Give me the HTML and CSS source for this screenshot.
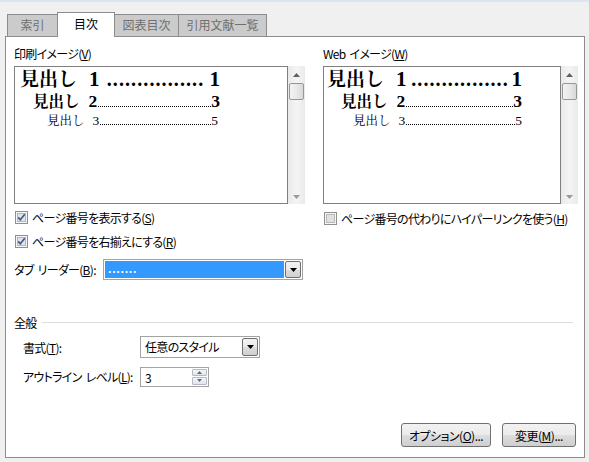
FILE: index.html
```html
<!DOCTYPE html>
<html lang="ja">
<head>
<meta charset="utf-8">
<title>目次</title>
<link rel="stylesheet" href="styles.css">
</head>
<body>
<div class="topline"></div>
<div class="tabs">
  <div class="tab w1">索引</div>
  <div class="tab active w2">目次</div>
  <div class="tab w3">図表目次</div>
  <div class="tab w4">引用文献一覧</div>
</div>
<div class="panel">
  <div class="top">
    <div class="col left">
      <div class="lbl">印刷イメージ(<u>V</u>)</div>
      <div class="preview">
        <div class="pbox">
          <div class="ln l1"><span class="k">見出し</span><span class="n num1">1</span><span class="lead big">................</span><span class="n">1</span></div>
          <div class="ln l2"><span class="k">見出し</span><span class="n num2">2</span><span class="lead fine"></span><span class="n">3</span></div>
          <div class="ln l3"><span class="k">見出し</span><span class="n num3">3</span><span class="lead fine"></span><span class="n">5</span></div>
        </div>
        <div class="sbar">
          <svg class="arr" width="7" height="4" viewBox="0 0 7 4"><path d="M0 4h7L3.5 0z" fill="#606060"/></svg>
          <div class="thumb"></div>
          <div class="sfill"></div>
          <svg class="arr" width="7" height="4" viewBox="0 0 7 4"><path d="M0 0h7L3.5 4z" fill="#9a9a9a"/></svg>
        </div>
      </div>
      <div class="chk r1">
        <svg width="13" height="13" viewBox="0 0 13 13"><rect x="0.5" y="0.5" width="12" height="12" fill="#f6f6f6" stroke="#8e8f8f"/><rect x="2.5" y="2.5" width="8" height="8" fill="#dfe3ea" stroke="#b4b9c0"/><path d="M3.2 6.4 L5.3 8.8 L9.8 3.3" fill="none" stroke="#44598a" stroke-width="1.7"/></svg>
        <span>ページ番号を表示する(<u>S</u>)</span>
      </div>
      <div class="chk r2">
        <svg width="13" height="13" viewBox="0 0 13 13"><rect x="0.5" y="0.5" width="12" height="12" fill="#f6f6f6" stroke="#8e8f8f"/><rect x="2.5" y="2.5" width="8" height="8" fill="#dfe3ea" stroke="#b4b9c0"/><path d="M3.2 6.4 L5.3 8.8 L9.8 3.3" fill="none" stroke="#44598a" stroke-width="1.7"/></svg>
        <span>ページ番号を右揃えにする(<u>R</u>)</span>
      </div>
      <div class="leadrow">
        <span class="llbl"><span class="sp">タブ</span>リーダー(<u>B</u>):</span>
        <div class="combo wide">
          <div class="selfield">.......</div>
          <div class="dbtn"><svg width="7" height="4" viewBox="0 0 7 4"><path d="M0 0h7L3.5 4z" fill="#000"/></svg></div>
        </div>
      </div>
    </div>
    <div class="vsep"></div>
    <div class="col right">
      <div class="lbl"><span class="sp">Web</span>イメージ(<u>W</u>)</div>
      <div class="preview">
        <div class="pbox wbox">
          <div class="ln l1 w"><span class="k">見出し</span><span class="n num1">1</span><span class="lead big">................</span><span class="n">1</span></div>
          <div class="ln l2 w"><span class="k">見出し</span><span class="n num2">2</span><span class="lead fine"></span><span class="n">3</span></div>
          <div class="ln l3 w"><span class="k">見出し</span><span class="n num3">3</span><span class="lead fine"></span><span class="n">5</span></div>
        </div>
        <div class="sbar">
          <svg class="arr" width="7" height="4" viewBox="0 0 7 4"><path d="M0 4h7L3.5 0z" fill="#606060"/></svg>
          <div class="thumb"></div>
          <div class="sfill"></div>
          <svg class="arr" width="7" height="4" viewBox="0 0 7 4"><path d="M0 0h7L3.5 4z" fill="#9a9a9a"/></svg>
        </div>
      </div>
      <div class="chk r1w">
        <svg width="13" height="13" viewBox="0 0 13 13"><rect x="0.5" y="0.5" width="12" height="12" fill="#f6f6f6" stroke="#8e8f8f"/><rect x="2.5" y="2.5" width="8" height="8" fill="#e0e0e0" stroke="#b9b9b9"/></svg>
        <span>ページ番号の代わりにハイパーリンクを使う(<u>H</u>)</span>
      </div>
    </div>
  </div>
  <div class="group"><span>全般</span><div class="hline"></div></div>
  <div class="frow f1">
    <span class="flbl">書式(<u>T</u>):</span>
    <div class="combo fmt">
      <div class="field">任意のスタイル</div>
      <div class="dbtn"><svg width="7" height="4" viewBox="0 0 7 4"><path d="M0 0h7L3.5 4z" fill="#000"/></svg></div>
    </div>
  </div>
  <div class="frow f2">
    <span class="flbl"><span class="sp">アウトライン</span>レベル(<u>L</u>):</span>
    <div class="spin">
      <div class="field">3</div>
      <div class="sbtns">
        <div class="sb"><svg width="5" height="3" viewBox="0 0 5 3"><path d="M0 3h5L2.5 0z" fill="#5a6a8a"/></svg></div>
        <div class="sb"><svg width="5" height="3" viewBox="0 0 5 3"><path d="M0 0h5L2.5 3z" fill="#5a6a8a"/></svg></div>
      </div>
    </div>
  </div>
  <div class="btns">
    <button class="btn b1">オプション(<u>O</u>)...</button>
    <button class="btn b2">変更(<u>M</u>)...</button>
  </div>
</div>
</body>
</html>
```

FILE: styles.css
```css
html, body {
  margin: 0;
  padding: 0;
}
body {
  width: 589px;
  height: 462px;
  overflow: hidden;
  background: #f0f0f0;
  font-family: "Noto Sans CJK JP", "Noto Sans", sans-serif;
  font-size: 12px;
  font-feature-settings: "palt";
  letter-spacing: -0.7px;
  color: #000;
  white-space: nowrap;
}
u { text-decoration: underline; text-underline-offset: 1px; }
.sp { margin-right: 4px; }

.topline {
  height: 2px;
  background: #dbe4ef;
}

.tabs {
  display: flex;
  align-items: flex-end;
  height: 24px;
  margin-top: 10px;
  padding-left: 7px;
}
.tab {
  box-sizing: border-box;
  height: 22px;
  border: 1px solid #8c8c8c;
  border-bottom: none;
  background: #cbcbcb;
  color: #6f6f6f;
  font-size: 12px;
  line-height: 20px;
  text-align: center;
  font-feature-settings: normal;
  letter-spacing: 0;
}
.tab.w1 { width: 51px; }
.tab.w2 { width: 58px; margin-left: -1px; }
.tab.w3 { width: 65px; margin-left: -1px; }
.tab.w4 { width: 89px; margin-left: -1px; }
.tab.active {
  position: relative;
  z-index: 1;
  height: 25px;
  margin-bottom: -1px;
  background: #fff;
  color: #000;
  line-height: 22px;
}

.panel {
  box-sizing: border-box;
  margin-left: 5px;
  width: 580px;
  height: 422px;
  border: 1px solid #8c8c8c;
  background: #fff;
  padding: 0 7px 0 8px;
}

.top {
  display: flex;
  padding-top: 9px;
}
.col { display: flex; flex-direction: column; }
.col.left { width: 291px; }
.col.right { width: 255px; }
.vsep {
  width: 1px;
  height: 260px;
  margin: -1px 9px 0 9px;
  background: #a0a0a0;
}
.lbl {
  height: 16px;
  line-height: 16px;
  margin-bottom: 4px;
}

.preview {
  display: flex;
  height: 138px;
}
.pbox {
  box-sizing: border-box;
  width: 274px;
  height: 138px;
  border: 1px solid #7f7f7f;
  background: #fff;
  padding-left: 5px;
  font-feature-settings: normal;
  letter-spacing: 0;
}
.pbox.wbox { width: 238px; padding-left: 3px; }

.ln {
  display: flex;
  align-items: baseline;
}
.ln .k {
  flex: none;
  font-family: "Noto Serif CJK JP", "Noto Sans CJK JP", serif;
}
.ln .n {
  flex: none;
  font-family: "Liberation Serif", serif;
}
.ln .lead { flex: 1 1 0; min-width: 0; }
.lead.big {
  font-family: "Liberation Serif", serif;
  letter-spacing: 1.1px;
  margin: 0 2px 0 4px;
  text-align: center;
}
.lead.fine {
  height: 0;
  border-bottom: 1px dotted #000;
  margin-left: 1px;
}

.l1 {
  width: 200px;
  height: 21px;
  line-height: 21px;
  font-size: 19px;
  font-weight: bold;
}
.l1 .n { font-size: 21px; }
.l1 .lead.big { font-size: 20px; }
.l1 .num1 { margin-left: 12px; }
.l2 {
  width: 187px;
  height: 25px;
  line-height: 25px;
  margin-left: 13px;
  font-size: 15.5px;
  font-weight: bold;
}
.l2 .n { font-size: 17.5px; }
.l2 .num2 { margin-left: 9px; }
.l3 {
  width: 171px;
  height: 14px;
  line-height: 14px;
  margin-left: 27px;
  font-size: 12.5px;
}
.l3 .n { font-size: 13.5px; }
.l3 .num3 { margin-left: 8px; }
.ln.w.l1 { width: 195px; }
.ln.w.l2 { width: 181px; margin-left: 14px; }
.ln.w.l3 { width: 169px; margin-left: 26px; }

.sbar {
  box-sizing: border-box;
  width: 17px;
  height: 138px;
  background: linear-gradient(to right, #e9e9e9, #f4f4f4 50%, #eaeaea);
  display: flex;
  flex-direction: column;
  align-items: center;
  padding: 7px 0 5px;
}
.sbar .arr { flex: none; }
.thumb {
  box-sizing: border-box;
  width: 15px;
  height: 17px;
  margin-top: 6px;
  border: 1px solid #979797;
  border-radius: 2px;
  background: linear-gradient(to right, #f3f3f3, #e9e9e9 50%, #d8d8d8);
}
.sfill { flex: 1; }

.chk {
  display: flex;
  align-items: center;
  height: 18px;
  padding-left: 1px;
}
.chk svg { flex: none; margin-right: 4px; }
.chk.r1 { margin-top: 4px; }
.chk.r2 { margin-top: 6px; }
.chk.r1w { margin-top: 5px; }

.leadrow {
  display: flex;
  align-items: center;
  height: 21px;
  margin-top: 9px;
}
.llbl { width: 89px; flex: none; }
.combo {
  box-sizing: border-box;
  display: flex;
  align-items: stretch;
  border: 1px solid #a3a3a3;
  background: #fff;
  padding: 1px;
}
.combo.wide { width: 200px; height: 21px; }
.selfield {
  flex: 1;
  margin-right: 1px;
  background: #3399ff;
  color: #fff;
  font-size: 11px;
  font-weight: bold;
  line-height: 14px;
  padding-left: 3px;
  letter-spacing: 0.6px;
}
.dbtn {
  box-sizing: border-box;
  width: 16px;
  border: 1px solid #707070;
  border-radius: 2px;
  background: linear-gradient(to bottom, #f2f2f2, #ebebeb 50%, #dddddd 51%, #cfcfcf);
  display: flex;
  align-items: center;
  justify-content: center;
}

.group {
  display: flex;
  align-items: center;
  height: 16px;
  margin-top: 9px;
}
.hline {
  flex: 1;
  height: 1px;
  margin: 0 4px 0 5px;
  background: #dcdcdc;
}

.frow {
  display: flex;
  align-items: center;
  padding-left: 9px;
}
.frow.f1 { height: 22px; margin-top: 6px; }
.frow.f2 { height: 21px; margin-top: 8px; }
.flbl { width: 117px; flex: none; }
.combo.fmt { width: 120px; height: 22px; }
.field {
  flex: 1;
  padding-left: 3px;
  line-height: 18px;
}
.spin {
  box-sizing: border-box;
  display: flex;
  width: 69px;
  height: 20px;
  border: 1px solid #a3a3a3;
  padding: 1px;
}
.sbtns {
  width: 15px;
  display: flex;
  flex-direction: column;
  gap: 1px;
}
.sb {
  flex: 1;
  box-sizing: border-box;
  border: 1px solid #b4b9c4;
  border-radius: 1px;
  background: linear-gradient(to bottom, #f5f6f8, #e2e5ea);
  display: flex;
  align-items: center;
  justify-content: center;
}

.btns {
  display: flex;
  justify-content: flex-end;
  gap: 11px;
  margin-top: 36px;
}
.btn {
  box-sizing: border-box;
  height: 24px;
  border: 1px solid #707070;
  border-radius: 3px;
  background: linear-gradient(to bottom, #f2f2f2, #ebebeb 50%, #dddddd 51%, #cfcfcf);
  font-family: "Noto Sans CJK JP", "Noto Sans", sans-serif;
  font-size: 12px;
  font-feature-settings: "palt";
  letter-spacing: -0.5px;
  color: #000;
  padding: 0;
}
.btn.b1 { width: 90px; }
.btn.b2 { width: 74px; margin-right: 1px; }
```
